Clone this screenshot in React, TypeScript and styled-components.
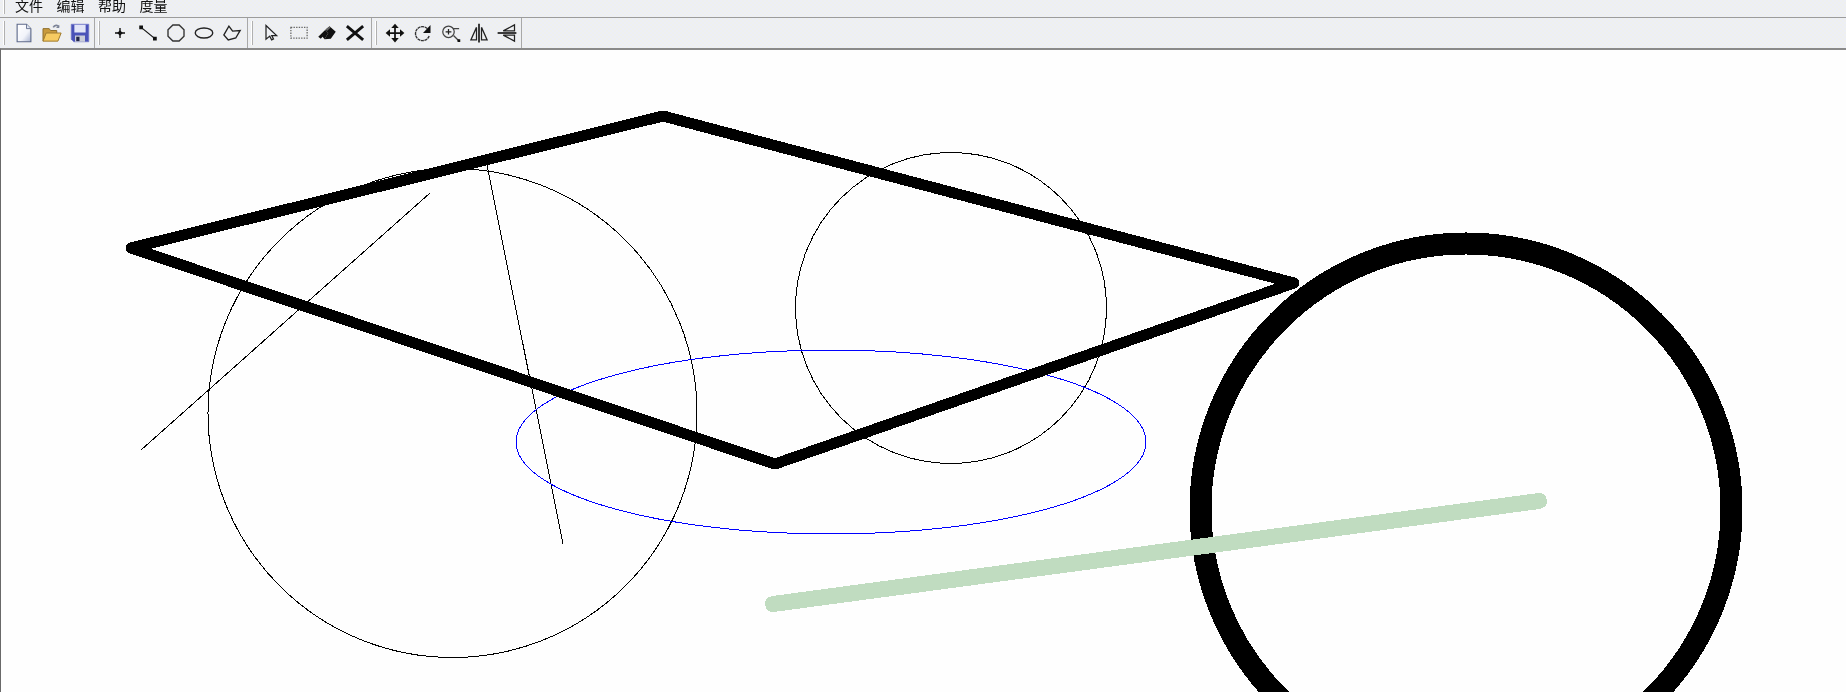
import React from "react";
import styled, { createGlobalStyle } from "styled-components";

const Global = createGlobalStyle`
  html, body { margin: 0; padding: 0; height: 100%; overflow: hidden; background: #fefefe; }
  #root { height: 100%; }
`;

const Window = styled.div`
  display: flex;
  flex-direction: column;
  width: 1846px;
  height: 692px;
  overflow: hidden;
  font-family: "Noto Sans CJK SC", "Liberation Sans", sans-serif;
`;

const ditherBg = `repeating-conic-gradient(#eff0ee 0 25%, #edeff6 0 50%) 0 0 / 4px 4px`;

const MenuBar = styled.div`
  flex: 0 0 18px;
  box-sizing: border-box;
  display: flex;
  align-items: flex-end;
  background: ${ditherBg};
  border-bottom: 1px solid #9c9c9c;
  overflow: hidden;
`;

const MenuGrip = styled.span`
  flex: 0 0 2px;
  height: 14px;
  margin: 0 10px 3px 3px;
  align-self: flex-start;
  border-left: 1px solid #fff;
  border-right: 1px solid #b4b4b4;
  box-sizing: border-box;
`;

const MenuItem = styled.span`
  width: 41.5px;
  flex: none;
  font-size: 14px;
  line-height: 14px;
  padding-bottom: 5px;
  color: #111;
  filter: blur(0.35px);
`;

const ToolBar = styled.div`
  flex: 0 0 30px;
  display: flex;
  background: ${ditherBg};
`;

const Group = styled.div<{ $tail: number }>`
  display: flex;
  align-items: center;
  box-sizing: border-box;
  border-right: 1px solid #a8a8a8;
  padding: 0 ${(p) => p.$tail}px 0 3px;
`;

const Grip = styled.span<{ $lead: number }>`
  flex: none;
  box-sizing: border-box;
  width: 2px;
  height: 24px;
  margin-right: ${(p) => p.$lead}px;
  border-left: 1px solid #fff;
  border-right: 1px solid #b0b0b0;
`;

const ToolButton = styled.button`
  width: 28px;
  height: 30px;
  padding: 0;
  border: 0;
  background: none;
  display: flex;
  align-items: center;
  justify-content: center;
  svg {
    width: 20px;
    height: 20px;
    display: block;
    filter: blur(0.3px);
  }
`;

const Canvas = styled.main`
  flex: 1;
  min-height: 0;
  box-sizing: border-box;
  background: #fefefe;
  border-top: 2px solid #8a8a8a;
  border-left: 1px solid #696969;
`;

const Drawing = styled.svg`
  display: block;
  width: 100%;
  height: 100%;
`;

const I = (p: { children: React.ReactNode }) => (
  <svg viewBox="0 0 16 16" fill="none" stroke="#111" strokeWidth="1">{p.children}</svg>
);

const icons: Record<string, React.ReactNode> = {
  file: (
    <I>
      <defs>
        <linearGradient id="pg" x1="0" y1="0" x2="1" y2="1">
          <stop offset="0" stopColor="#ffffff" />
          <stop offset=".6" stopColor="#f2f4fa" />
          <stop offset="1" stopColor="#aab4d0" />
        </linearGradient>
      </defs>
      <path d="M2.5 1H10l3.5 3.5V15h-11z" fill="url(#pg)" stroke="#5f6a8a" strokeWidth=".9" />
      <path d="M10 1v3.5h3.5" fill="#dfe5f2" stroke="#5f6a8a" strokeWidth=".7" />
    </I>
  ),
  open: (
    <I>
      <path d="M9 3.5c1-2 3.5-2 4.5-.5" stroke="#7d8498" strokeWidth="1.3" />
      <path d="M13.8 1.3v2.6h-2.6" fill="#7d8498" stroke="none" />
      <path d="M.8 14.5V4.5h5l1 1.5h5v2" fill="#c89a3e" stroke="#8f6f2c" strokeWidth=".8" />
      <path d="M.8 14.5 3.3 8h12l-2.6 6.5z" fill="#f6cb62" stroke="#a07c30" strokeWidth=".8" />
    </I>
  ),
  save: (
    <I>
      <path d="M1 1h14v14H3l-2-2z" fill="#4a52b8" stroke="#7078c8" strokeWidth=".6" />
      <rect x="3.5" y="1.4" width="9" height="6.2" fill="#e2e5f7" stroke="none" />
      <rect x="4" y="10" width="8" height="5" fill="#c9ccd8" stroke="none" />
      <rect x="5" y="11" width="2.6" height="3.5" fill="#23264a" stroke="none" />
    </I>
  ),
  point: (
    <I>
      <path d="M8 4v8M4 8h8" strokeWidth="1.1" />
      <path d="M8 5.8 10.2 8 8 10.2 5.8 8z" fill="#111" stroke="none" />
    </I>
  ),
  line: (
    <I>
      <path d="M2.5 3.5 13.5 12.5" strokeWidth="1" />
      <rect x="1" y="2" width="3" height="3" fill="#111" stroke="none" />
      <rect x="12" y="11" width="3" height="3" fill="#111" stroke="none" />
    </I>
  ),
  circle: (
    <I>
      <path d="M5.5 1.6h5L14.4 5.5v5L10.5 14.4h-5L1.6 10.5v-5z" stroke="#333" strokeWidth="1.1" />
    </I>
  ),
  ellipse: (
    <I>
      <ellipse cx="8" cy="8" rx="7" ry="4" stroke="#222" strokeWidth="1.1" />
    </I>
  ),
  poly: (
    <I>
      <path d="M5.5 2.5 8.5 6.5 14.5 6 11 12 5 13.5 1.5 9.5z" stroke="#222" strokeWidth="1.1" />
    </I>
  ),
  cursor: (
    <I>
      <path d="M4 2v11l3-2.5 1.5 3 1.5-.8L8.6 10H12.5z" fill="#eef0f4" stroke="#222" strokeWidth="1" />
    </I>
  ),
  rect: (
    <I>
      <rect x="1.5" y="3.5" width="13" height="8.5" stroke="#666" strokeWidth="1" strokeDasharray="1.1 1" />
    </I>
  ),
  erase: (
    <I>
      <path d="M1 11 6.5 5.5 9 8l-3 5-1.5-2-1.5 1.5z" fill="#111" stroke="none" />
      <path d="M6.5 5.5 10 2.5l5 4.5-4 5.5-5 .5 3-5z" fill="#111" stroke="none" />
      <path d="M7 5 10 2.8l1 .8-3 2.8z" fill="#666" stroke="none" />
    </I>
  ),
  cross: (
    <I>
      <path d="M1.5 2.5 14.5 13.5M14.5 2.5 1.5 13.5" strokeWidth="2.3" />
    </I>
  ),
  move: (
    <I>
      <path d="M8 3v10M3 8h10" strokeWidth="1.4" />
      <path d="M8 .5 11 4H5zM8 15.5 5 12h6zM.5 8 4 5v6zM15.5 8 12 11V5z" fill="#111" stroke="none" />
    </I>
  ),
  rotate: (
    <I>
      <path d="M11.5 4.5A5.6 5.6 0 1 0 13 10" stroke="#333" strokeWidth="1.1" strokeDasharray="2.4 .5" />
      <path d="M14 1.5V8H8z" fill="#111" stroke="none" />
    </I>
  ),
  zoom: (
    <I>
      <circle cx="6" cy="7" r="4.6" stroke="#444" strokeWidth="1" />
      <path d="M6 4.7v4.6M3.7 7h4.6" stroke="#222" strokeWidth="1" />
      <path d="M9.5 4.5h5M10 10 14 14" stroke="#444" strokeWidth="1.1" />
      <rect x="13.2" y="13" width="2.2" height="2.2" fill="#111" stroke="none" />
    </I>
  ),
  mirrorV: (
    <I>
      <path d="M8 .5v15" strokeWidth="1.3" />
      <path d="M6 3.5v10H1.5z" stroke="#222" strokeWidth="1" />
      <path d="M10 3.5v10h4.5z" stroke="#222" strokeWidth="1" />
    </I>
  ),
  mirrorH: (
    <I>
      <path d="M.5 8h15" strokeWidth="1.3" />
      <path d="M14 1.5v4.8H5z" stroke="#222" strokeWidth="1" />
      <path d="M14 14.5V9.7H5z" stroke="#222" strokeWidth="1" />
    </I>
  ),
};

const groups = [
  { lead: 5, tail: 0, tools: ["file", "open", "save"] },
  { lead: 6, tail: 1, tools: ["point", "line", "circle", "ellipse", "poly"] },
  { lead: 4, tail: 2, tools: ["cursor", "rect", "erase", "cross"] },
  { lead: 4, tail: 0, tools: ["move", "rotate", "zoom", "mirrorV", "mirrorH"] },
];

export default function App() {
  return (
    <Window>
      <Global />
      <MenuBar>
        <MenuGrip />
        {["文件", "编辑", "帮助", "度量"].map((m) => (
          <MenuItem key={m}>{m}</MenuItem>
        ))}
      </MenuBar>
      <ToolBar>
        {groups.map((g) => (
          <Group key={g.tools[0]} $tail={g.tail}>
            <Grip $lead={g.lead} />
            {g.tools.map((t) => (
              <ToolButton key={t}>{icons[t]}</ToolButton>
            ))}
          </Group>
        ))}
      </ToolBar>
      <Canvas>
        <Drawing viewBox="1 50 1845 642" fill="none" shapeRendering="crispEdges">
          <circle cx="452.5" cy="413" r="244.5" stroke="#000" strokeWidth="1" />
          <circle cx="951" cy="308" r="155.5" stroke="#000" strokeWidth="1" />
          <line x1="141" y1="450" x2="430" y2="193" stroke="#000" strokeWidth="1" />
          <line x1="487" y1="165" x2="563" y2="544" stroke="#000" strokeWidth="1" />
          <ellipse cx="831" cy="442" rx="315" ry="92" stroke="#0000ff" strokeWidth="1" />
          <path d="M131 248 663 116 1294 283 775 464z" stroke="#000" strokeWidth="11" strokeLinejoin="round" />
          <circle cx="1466" cy="509" r="265.5" stroke="#000" strokeWidth="22" />
          <line x1="773" y1="604" x2="1539" y2="501" stroke="#c0dcc0" strokeWidth="16" strokeLinecap="round" />
        </Drawing>
      </Canvas>
    </Window>
  );
}
